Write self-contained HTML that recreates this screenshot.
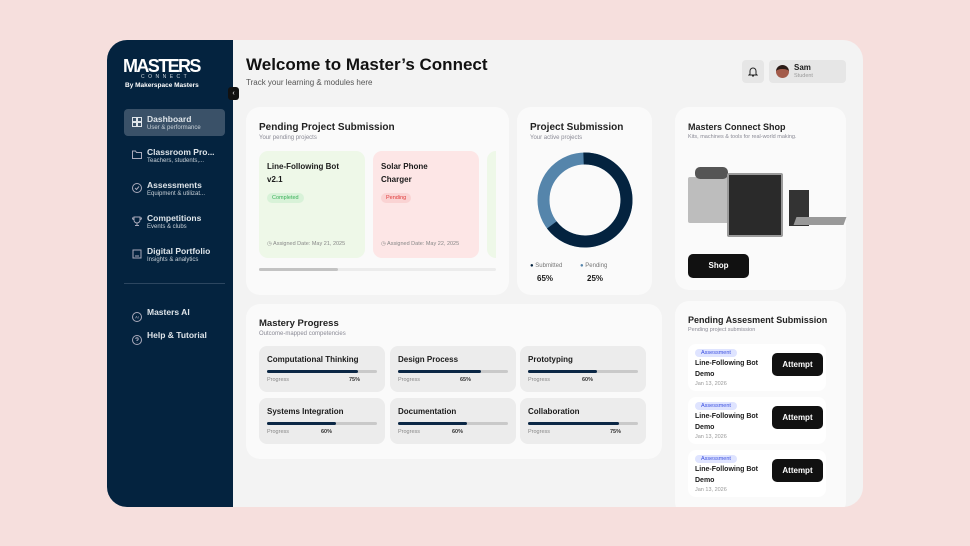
<!DOCTYPE html>
<html><head><meta charset="utf-8"><style>
*{box-sizing:border-box;margin:0;padding:0}
body{width:970px;height:546px;background:#f6dfdd;font-family:"Liberation Sans",sans-serif;position:relative;overflow:hidden;color:#1b1b1b}
.a{position:absolute}
.app{left:107px;top:40px;width:756px;height:467px;border-radius:20px;background:#f3f3f3;overflow:hidden}
.side{left:0;top:0;width:126px;height:467px;background:#04233f;color:#fff}
.card{background:#fafafa;border-radius:14px}
.t{font-weight:bold;font-size:10px;color:#222}
.s{font-size:6px;color:#8a8a95}
.nav{left:17px;width:101px;height:27px;border-radius:4px}
.nav b{position:absolute;left:23px;top:5px;font-size:8.5px;color:#dfe5ea}
.nav i{position:absolute;left:23px;top:16px;font-size:6px;font-style:normal;color:#c9d1d8}
.nav svg{position:absolute;left:8px;top:8px}
.m{background:#ececec;border-radius:8px;width:126px;height:46px}
.m b{position:absolute;left:8px;top:9px;font-size:8px}
.bar{position:absolute;left:8px;top:24px;width:110px;height:3px;background:#c9c9c9;border-radius:2px}
.bar div{height:3px;background:#0b2745;border-radius:2px}
.m span{position:absolute;top:31px;font-size:5.5px;color:#888}
.m em{position:absolute;top:31px;font-size:5.5px;font-style:normal;font-weight:bold;color:#333}
.pa{background:#fff;border-radius:8px;width:138px;height:47px}
.tag{position:absolute;left:7px;top:5px;background:#dfe4ff;color:#3a4fe0;font-size:5.5px;padding:1px 6px;border-radius:5px}
.pa b{position:absolute;left:7px;top:14px;font-size:7px;line-height:11px}
.pa i{position:absolute;left:7px;top:37px;font-size:5.5px;font-style:normal;color:#999}
.btn{position:absolute;left:84px;top:9px;width:51px;height:23px;background:#111;color:#fff;border-radius:5px;font-size:8px;font-weight:bold;text-align:center;line-height:23px}
</style></head><body>
<div class="a app">
 <div class="a side">
  <div class="a" style="left:16px;top:16px;font-size:18px;font-weight:bold;letter-spacing:-1.6px">MASTERS</div>
  <div class="a" style="left:34px;top:34px;font-size:5px;letter-spacing:3.5px;color:#cfd6dd">CONNECT</div>
  <div class="a" style="left:18px;top:42px;font-size:6.5px;font-weight:bold">By Makerspace Masters</div>
  <div class="a nav" style="top:69px;background:#3a5168"><svg width="10" height="10" viewBox="0 0 10 10" fill="none" stroke="#dfe5ea"><rect x=".5" y=".5" width="4" height="4"/><rect x="5.5" y=".5" width="4" height="4"/><rect x=".5" y="5.5" width="4" height="4"/><rect x="5.5" y="5.5" width="4" height="4"/></svg><b>Dashboard</b><i>User &amp; performance</i></div>
  <div class="a nav" style="top:102px"><svg width="10" height="9" viewBox="0 0 10 9" fill="none" stroke="#aab"><path d="M.5 1h3l1 1.5h5v6H.5z"/></svg><b>Classroom Pro...</b><i>Teachers, students,...</i></div>
  <div class="a nav" style="top:135px"><svg width="10" height="10" viewBox="0 0 10 10" fill="none" stroke="#aab"><circle cx="5" cy="5" r="4.5"/><path d="M3 5l1.5 1.5L7 3.5"/></svg><b>Assessments</b><i>Equipment &amp; utilizat...</i></div>
  <div class="a nav" style="top:168px"><svg width="10" height="10" viewBox="0 0 10 10" fill="none" stroke="#aab"><path d="M2 1h6v3a3 3 0 0 1-6 0zM5 7v2M3 9.5h4M2 2H.5a2 2 0 0 0 2 2M8 2h1.5a2 2 0 0 1-2 2"/></svg><b>Competitions</b><i>Events &amp; clubs</i></div>
  <div class="a nav" style="top:201px"><svg width="10" height="10" viewBox="0 0 10 10" fill="none" stroke="#aab"><rect x="1" y="1" width="8" height="8"/><path d="M3 7h4"/></svg><b>Digital Portfolio</b><i>Insights &amp; analytics</i></div>
  <div class="a" style="left:17px;top:243px;width:101px;height:1px;background:#2c4660"></div>
  <div class="a nav" style="top:264px"><svg width="10" height="10" viewBox="0 0 10 10" fill="none" stroke="#aab"><circle cx="5" cy="5" r="4.5"/><text x="5" y="6.5" font-size="4" fill="#aab" stroke="none" text-anchor="middle">AI</text></svg><b style="top:3px">Masters AI</b></div>
  <div class="a nav" style="top:287px"><svg width="10" height="10" viewBox="0 0 10 10" fill="none" stroke="#aab"><circle cx="5" cy="5" r="4.5"/><path d="M3.8 4a1.2 1.2 0 1 1 1.2 1.2v.8M5 7.2v.3"/></svg><b style="top:3px">Help &amp; Tutorial</b></div>
 </div>
 <div class="a" style="left:121px;top:47px;width:11px;height:13px;background:#111;border-radius:3px;color:#fff;font-size:7px;text-align:center;line-height:13px">‹</div>
 <div class="a" style="left:139px;top:15px;font-size:17px;font-weight:bold;color:#111">Welcome to Master’s Connect</div>
 <div class="a" style="left:139px;top:38px;font-size:8px;color:#555">Track your learning &amp; modules here</div>
 <div class="a" style="left:635px;top:20px;width:22px;height:23px;background:#e6e6e6;border-radius:4px"><svg class="a" style="left:6px;top:6px" width="10" height="11" viewBox="0 0 10 11" fill="none" stroke="#222"><path d="M2 8V5a3 3 0 0 1 6 0v3l1 1H1zM4 10h2"/></svg></div>
 <div class="a" style="left:662px;top:20px;width:77px;height:23px;background:#e6e6e6;border-radius:4px">
  <div class="a" style="left:7px;top:5px;width:13px;height:13px;border-radius:50%;background:#a35b4a;border-top:4px solid #2a1a15"></div>
  <div class="a" style="left:25px;top:3px;font-size:8px;font-weight:bold">Sam</div>
  <div class="a" style="left:25px;top:13px;font-size:5.5px;color:#999">Student</div>
 </div>
 <div class="a card" style="left:139px;top:67px;width:263px;height:188px">
  <div class="a t" style="left:13px;top:15px">Pending Project Submission</div>
  <div class="a s" style="left:13px;top:28px">Your pending projects</div>
  <div class="a" style="left:13px;top:44px;width:106px;height:107px;background:#eef8e8;border-radius:9px">
   <div class="a" style="left:8px;top:9px;font-size:8px;font-weight:bold;line-height:13px">Line-Following Bot<br>v2.1</div>
   <div class="a" style="left:8px;top:42px;background:#d8f2d8;color:#3bb25a;font-size:5.5px;padding:2px 5px;border-radius:5px">Completed</div>
   <div class="a" style="left:8px;top:90px;font-size:5.5px;color:#888">◷ Assigned Date: May 21, 2025</div>
  </div>
  <div class="a" style="left:127px;top:44px;width:106px;height:107px;background:#fde6e6;border-radius:9px">
   <div class="a" style="left:8px;top:9px;font-size:8px;font-weight:bold;line-height:13px">Solar Phone<br>Charger</div>
   <div class="a" style="left:8px;top:42px;background:#fad3d3;color:#e03a3a;font-size:5.5px;padding:2px 5px;border-radius:5px">Pending</div>
   <div class="a" style="left:8px;top:90px;font-size:5.5px;color:#888">◷ Assigned Date: May 22, 2025</div>
  </div>
  <div class="a" style="left:241px;top:44px;width:9px;height:107px;background:#eef8e8;border-radius:9px 0 0 9px"></div>
  <div class="a" style="left:13px;top:161px;width:237px;height:3px;background:#ececec;border-radius:2px"><div style="width:79px;height:3px;background:#c3c3c3;border-radius:2px"></div></div>
 </div>
 <div class="a card" style="left:410px;top:67px;width:135px;height:188px">
  <div class="a t" style="left:13px;top:15px">Project Submission</div>
  <div class="a s" style="left:13px;top:28px">Your active projects</div>
  <svg class="a" style="left:20px;top:45px" width="96" height="96" viewBox="0 0 96 96"><circle cx="48" cy="48" r="41.5" fill="none" stroke="#5585ab" stroke-width="12"/><circle cx="48" cy="48" r="41.5" fill="none" stroke="#04233f" stroke-width="12" stroke-dasharray="170 400" transform="rotate(-92 48 48)"/></svg>
  <div class="a" style="left:13px;top:156px;font-size:6px;color:#777"><span style="color:#04233f">●</span> Submitted</div>
  <div class="a" style="left:63px;top:156px;font-size:6px;color:#777"><span style="color:#5585ab">●</span> Pending</div>
  <div class="a" style="left:20px;top:167px;font-size:8px;font-weight:bold">65%</div>
  <div class="a" style="left:70px;top:167px;font-size:8px;font-weight:bold">25%</div>
 </div>
 <div class="a card" style="left:568px;top:67px;width:171px;height:183px">
  <div class="a t" style="left:13px;top:15px;font-size:9px">Masters Connect Shop</div>
  <div class="a s" style="left:13px;top:27px;font-size:5.5px">Kits, machines &amp; tools for real-world making.</div>
  <div class="a" style="left:13px;top:70px;width:42px;height:46px;background:#bdbdbd;border-radius:2px"></div>
  <div class="a" style="left:20px;top:60px;width:33px;height:12px;background:#555;border-radius:5px"></div>
  <div class="a" style="left:52px;top:66px;width:56px;height:64px;background:#2a2a2a;border:2px solid #9a9a9a;border-radius:2px"></div>
  <div class="a" style="left:114px;top:83px;width:20px;height:36px;background:#333"></div>
  <div class="a" style="left:120px;top:110px;width:50px;height:8px;background:#999;transform:skew(-20deg)"></div>
  <div class="a" style="left:13px;top:147px;width:61px;height:24px;background:#111;border-radius:5px;color:#fff;font-size:8px;font-weight:bold;text-align:center;line-height:24px">Shop</div>
 </div>
 <div class="a card" style="left:139px;top:264px;width:416px;height:155px">
  <div class="a t" style="left:13px;top:14px;font-size:9.5px">Mastery Progress</div>
  <div class="a s" style="left:13px;top:27px">Outcome-mapped competencies</div>
  <div class="a m" style="left:13px;top:42px"><b>Computational Thinking</b><div class="bar"><div style="width:83%"></div></div><span style="left:8px">Progress</span><em style="left:90px">75%</em></div>
  <div class="a m" style="left:144px;top:42px"><b>Design Process</b><div class="bar"><div style="width:75%"></div></div><span style="left:8px">Progress</span><em style="left:70px">65%</em></div>
  <div class="a m" style="left:274px;top:42px"><b>Prototyping</b><div class="bar"><div style="width:63%"></div></div><span style="left:8px">Progress</span><em style="left:62px">60%</em></div>
  <div class="a m" style="left:13px;top:94px"><b>Systems Integration</b><div class="bar"><div style="width:63%"></div></div><span style="left:8px">Progress</span><em style="left:62px">60%</em></div>
  <div class="a m" style="left:144px;top:94px"><b>Documentation</b><div class="bar"><div style="width:63%"></div></div><span style="left:8px">Progress</span><em style="left:62px">60%</em></div>
  <div class="a m" style="left:274px;top:94px"><b>Collaboration</b><div class="bar"><div style="width:83%"></div></div><span style="left:8px">Progress</span><em style="left:90px">75%</em></div>
 </div>
 <div class="a card" style="left:568px;top:261px;width:171px;height:215px">
  <div class="a t" style="left:13px;top:14px;font-size:9px">Pending Assesment Submission</div>
  <div class="a s" style="left:13px;top:26px;font-size:5.5px">Pending project submission</div>
  <div class="a pa" style="left:13px;top:43px"><div class="tag">Assessment</div><b>Line-Following Bot<br>Demo</b><i>Jan 13, 2026</i><div class="btn">Attempt</div></div>
  <div class="a pa" style="left:13px;top:96px"><div class="tag">Assessment</div><b>Line-Following Bot<br>Demo</b><i>Jan 13, 2026</i><div class="btn">Attempt</div></div>
  <div class="a pa" style="left:13px;top:149px"><div class="tag">Assessment</div><b>Line-Following Bot<br>Demo</b><i>Jan 13, 2026</i><div class="btn">Attempt</div></div>
 </div>
</div>
</body></html>
